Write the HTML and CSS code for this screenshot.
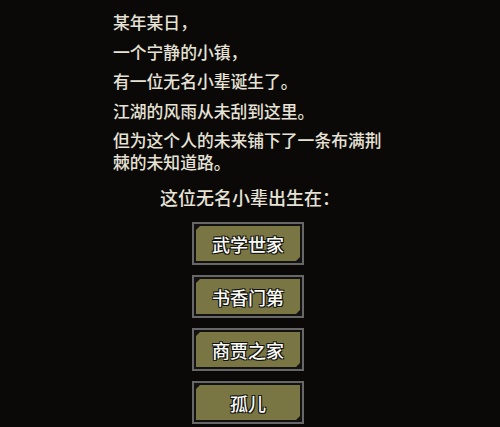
FILE: index.html
```html
<html lang="zh-CN"><head>
  <meta charset="UTF-8">
  <meta name="viewport" content="width=device-width, initial-scale=1.0">
  <title>出身</title>
  <link rel="stylesheet" href="styles.css">
</head>
<body>
  <div class="story">
    <p>某年某日，</p>
    <p>一个宁静的小镇，</p>
    <p>有一位无名小辈诞生了。</p>
    <p>江湖的风雨从未刮到这里。</p>
    <p>但为这个人的未来铺下了一条布满荆棘的未知道路。</p>
  </div>

  <div class="prompt">这位无名小辈出生在：</div>

  <div class="choices">
    <button class="choice"><span class="choice-face">武学世家</span></button>
    <button class="choice"><span class="choice-face">书香门第</span></button>
    <button class="choice"><span class="choice-face">商贾之家</span></button>
    <button class="choice"><span class="choice-face">孤儿</span></button>
  </div>
</body></html>
```
FILE: styles.css
```css
body {
  margin: 0;
  background: #0a0908;
  font-family: "Noto Sans CJK SC", "Noto Sans", sans-serif;
  color: #e6e2d6;
  height: 427px;
  overflow: hidden;
}

.story {
  width: 276px;
  padding: 11px 0 0 113px;
  font-size: 16.8px;
  font-weight: 500;
  line-height: 22px;
}

.story p {
  margin: 0 0 7.5px 0;
}

.story p:last-child {
  margin-bottom: 0;
}

.prompt {
  text-align: center;
  font-size: 18px;
  font-weight: 500;
  line-height: 24px;
  margin-top: 12px;
}

.choices {
  display: flex;
  flex-direction: column;
  align-items: center;
  gap: 10px;
  margin-top: 13px;
  padding-right: 4px;
}

.choice {
  display: block;
  width: 112px;
  height: 43px;
  padding: 2px;
  border: 2px solid #676767;
  background: #121212;
  box-sizing: border-box;
  cursor: pointer;
}

.choice-face {
  display: flex;
  justify-content: center;
  align-items: center;
  height: 100%;
  background: #797644;
  clip-path: polygon(4px 0, 100% 0, 100% calc(100% - 4px), calc(100% - 4px) 100%, 0 100%, 0 4px);
  font-family: "Noto Sans CJK SC", sans-serif;
  font-size: 18px;
  font-weight: 500;
  color: #fbfbf6;
  text-shadow: 1px 1px 0 #111, -1px -1px 0 #111, 1px -1px 0 #111, -1px 1px 0 #111;
}
```
